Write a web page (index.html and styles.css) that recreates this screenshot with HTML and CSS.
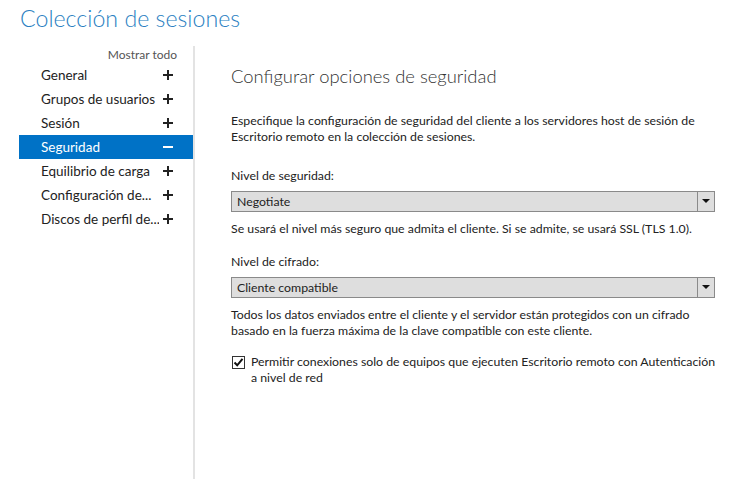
FILE: index.html
```html
<!DOCTYPE html>
<html lang="es">
<head>
<meta charset="utf-8">
<title>Colección de sesiones</title>
<link rel="stylesheet" href="styles.css">
</head>
<body>
<header class="title">Colección de sesiones</header>
<div class="main">
  <nav class="nav">
    <div class="showall">Mostrar todo</div>
    <ul class="navlist">
      <li class="item"><span class="label">General</span><span class="sign plus"></span></li>
      <li class="item"><span class="label">Grupos de usuarios</span><span class="sign plus"></span></li>
      <li class="item"><span class="label">Sesión</span><span class="sign plus"></span></li>
      <li class="item selected"><span class="label">Seguridad</span><span class="sign minus"></span></li>
      <li class="item"><span class="label">Equilibrio de carga</span><span class="sign plus"></span></li>
      <li class="item"><span class="label">Configuración de...</span><span class="sign plus"></span></li>
      <li class="item"><span class="label">Discos de perfil de...</span><span class="sign plus"></span></li>
    </ul>
  </nav>
  <section class="content">
    <h1 class="heading">Configurar opciones de seguridad</h1>
    <p class="desc">Especifique la configuración de seguridad del cliente a los servidores host de sesión de<br>Escritorio remoto en la colección de sesiones.</p>
    <div class="field">
      <div class="flabel">Nivel de seguridad:</div>
      <div class="select"><span class="value">Negotiate</span><span class="arrow"></span></div>
      <p class="help">Se usará el nivel más seguro que admita el cliente. Si se admite, se usará SSL (TLS 1.0).</p>
    </div>
    <div class="field second">
      <div class="flabel">Nivel de cifrado:</div>
      <div class="select"><span class="value">Cliente compatible</span><span class="arrow"></span></div>
      <p class="help">Todos los datos enviados entre el cliente y el servidor están protegidos con un cifrado<br>basado en la fuerza máxima de la clave compatible con este cliente.</p>
    </div>
    <div class="check">
      <span class="box"><svg width="11" height="11" viewBox="0 0 11 11"><path d="M1.5 5.5 L4.2 8.3 L9.5 1.8" fill="none" stroke="#111" stroke-width="2"/></svg></span>
      <span class="ctext">Permitir conexiones solo de equipos que ejecuten Escritorio remoto con Autenticación<br>a nivel de red</span>
    </div>
  </section>
</div>
</body>
</html>
```

FILE: styles.css
```css
* { box-sizing: border-box; }
html, body { margin: 0; padding: 0; background: #fff; }
body {
  font-family: Lato, "Open Sans", "Noto Sans", sans-serif;
  color: #222;
  font-size: 12.3px;
  height: 479px;
  overflow: hidden;
}
.title {
  font-weight: 300;
  font-size: 23.2px;
  line-height: 32px;
  color: #2b7fc2;
  padding: 2px 0 0 20px;
  height: 46px;
}
.main {
  display: flex;
  height: 433px;
}
.nav {
  width: 195px;
  padding-left: 19px;
  border-right: 2px solid #e3e3e3;
}
.showall {
  text-align: right;
  padding-right: 16px;
  color: #555;
  font-size: 12px;
  line-height: 17px;
}
.navlist { list-style: none; margin: 0; padding: 0; }
.item {
  display: flex;
  align-items: center;
  height: 24px;
  padding-left: 22px;
  padding-right: 20px;
  font-size: 13.5px;
  color: #222;
}
.item .label {
  flex: 1;
  white-space: nowrap;
  overflow: hidden;
}
.item.selected { background: #0072c6; color: #fff; }
.sign {
  position: relative;
  width: 10px;
  height: 10px;
  flex: none;
  margin-left: 4px;
}
.sign::before, .plus::after {
  content: "";
  position: absolute;
  background: #222;
}
.sign::before { left: 0; top: 4px; width: 10px; height: 2px; }
.plus::after { left: 4px; top: 0; width: 2px; height: 10px; }
.selected .sign::before { background: #fff; }
.content {
  flex: 1;
  padding: 18px 16px 0 36px;
}
.heading {
  margin: 0;
  font-weight: 300;
  font-size: 18.4px;
  line-height: 24px;
  color: #333;
}
.desc { margin: 25px 0 0; line-height: 16px; white-space: nowrap; }
.field { margin-top: 23px; }
.field.second { margin-top: 17px; }
.flabel { line-height: 16px; }
.select {
  margin-top: 7px;
  display: flex;
  height: 21px;
  border: 1px solid #8a8a8a;
  background: #dedede;
}
.select .value { flex: 1; padding-left: 5px; line-height: 19px; }
.select .arrow {
  position: relative;
  width: 17px;
  border-left: 1px solid #8a8a8a;
}
.select .arrow::after {
  content: "";
  position: absolute;
  left: 4px;
  top: 7px;
  border-left: 4px solid transparent;
  border-right: 4px solid transparent;
  border-top: 4px solid #111;
}
.help { margin: 9px 0 0; line-height: 16px; white-space: nowrap; }
.check {
  margin-top: 15px;
  display: flex;
  align-items: flex-start;
}
.box {
  width: 13px;
  height: 13px;
  border: 1px solid #333;
  margin: 2px 6px 0 1px;
  flex: none;
  display: flex;
  align-items: center;
  justify-content: center;
  background: #fff;
}
.ctext { line-height: 16px; white-space: nowrap; }
```
